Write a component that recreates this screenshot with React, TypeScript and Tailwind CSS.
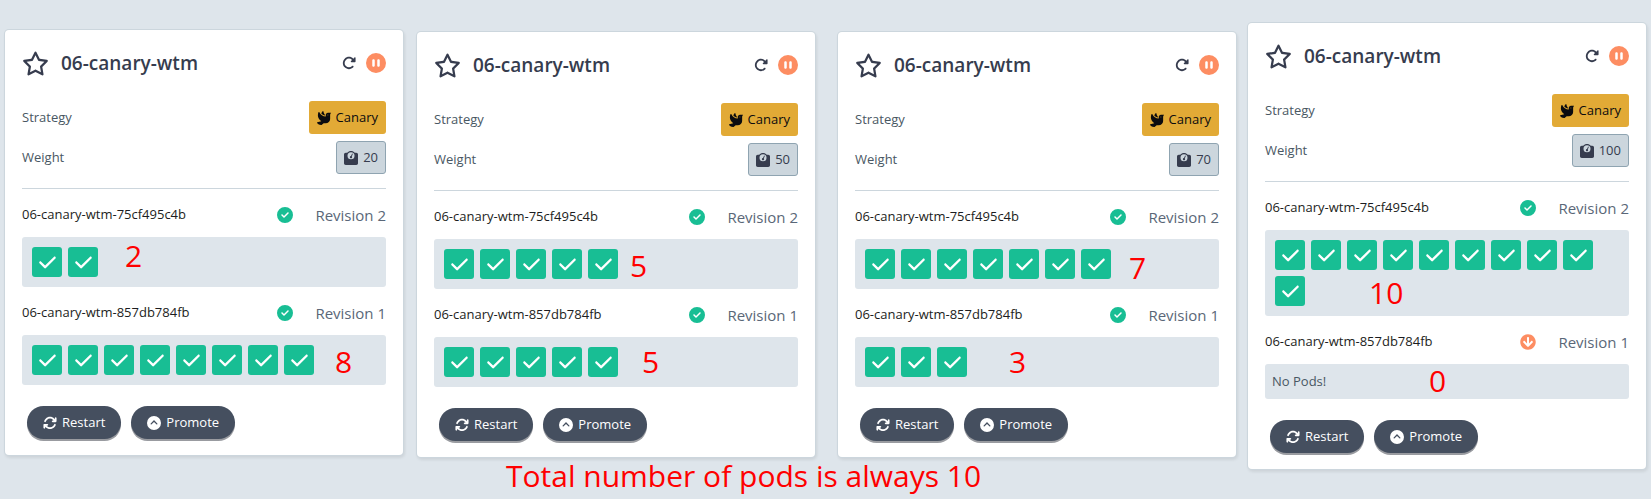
import React from "react";
import {
  FaCheck,
  FaCircleCheck,
  FaCirclePause,
  FaRegStar,
  FaRotateRight,
  FaArrowsRotate,
  FaCircleChevronUp,
  FaWeightScale,
} from "react-icons/fa6";
import { FaArrowCircleDown, FaDove } from "react-icons/fa";

type Note = { text: string; place: string };
type Revision = { name: string; number: number; pods: number; note: Note };
type Rollout = { weight: number; place: string; revisions: Revision[] };

const STABLE = "06-canary-wtm-857db784fb";
const CANARY = "06-canary-wtm-75cf495c4b";

const rollouts: Rollout[] = [
  {
    weight: 20,
    place: "mt-[30px]",
    revisions: [
      { name: CANARY, number: 2, pods: 2, note: { text: "2", place: "left-[103px] top-1" } },
      { name: STABLE, number: 1, pods: 8, note: { text: "8", place: "left-[313px] top-3" } },
    ],
  },
  {
    weight: 50,
    place: "mt-8 ml-3.5",
    revisions: [
      { name: CANARY, number: 2, pods: 5, note: { text: "5", place: "left-[196px] top-3" } },
      { name: STABLE, number: 1, pods: 5, note: { text: "5", place: "left-[208px] top-2.5" } },
    ],
  },
  {
    weight: 70,
    place: "mt-8 ml-[23px]",
    revisions: [
      { name: CANARY, number: 2, pods: 7, note: { text: "7", place: "left-[274px] top-3.5" } },
      { name: STABLE, number: 1, pods: 3, note: { text: "3", place: "left-[154px] top-2.5" } },
    ],
  },
  {
    weight: 100,
    place: "mt-[23px] ml-3",
    revisions: [
      { name: CANARY, number: 2, pods: 10, note: { text: "10", place: "left-[104px] top-12" } },
      { name: STABLE, number: 1, pods: 0, note: { text: "0", place: "left-[164px] top-0.5" } },
    ],
  },
];

function PodRow({ revision }: { revision: Revision }) {
  const { name, number, pods, note } = revision;
  return (
    <section>
      <div className="mb-2.5 mt-3.5 flex h-6 items-center">
        <h3 className="flex-1 text-[13px] text-[#1c1d21]">{name}</h3>
        {pods > 0 ? (
          <FaCircleCheck className="size-4 text-[#18be94]" />
        ) : (
          <FaArrowCircleDown className="size-4 text-[#fd8d62]" />
        )}
        <span className="w-[93px] text-right text-[15px] text-[#5a6778]">Revision {number}</span>
      </div>
      <div className="relative rounded-[3px] bg-[#dee5eb]">
        {pods > 0 ? (
          <ul className="flex flex-wrap gap-1.5 p-2.5">
            {Array.from({ length: pods }, (_, i) => (
              <li
                key={i}
                className="flex size-[30px] items-center justify-center rounded-[3px] bg-[#18be94] text-white"
              >
                <FaCheck className="size-[19px]" />
              </li>
            ))}
          </ul>
        ) : (
          <p className="px-[7px] text-[13px] leading-[35px] text-[#495763]">No Pods!</p>
        )}
        <span className={`absolute text-[30px] leading-none text-[#ff0000] ${note.place}`}>{note.text}</span>
      </div>
    </section>
  );
}

function ActionButton({ icon, label }: { icon: React.ReactNode; label: string }) {
  return (
    <button
      type="button"
      className="flex h-[33px] items-center gap-[5px] rounded-full bg-[#454f5f] px-4 text-[13px] text-white shadow-[0_2px_0_#999ba0]"
    >
      {icon}
      {label}
    </button>
  );
}

function RolloutCard({ rollout }: { rollout: Rollout }) {
  return (
    <article
      className={`min-w-0 flex-1 rounded-[4px] bg-white px-[17px] pb-4 pt-[17px] shadow-[0_0_0_1px_#ccd6dd,1px_2px_3px_1px_rgba(0,0,0,0.08)] ${rollout.place}`}
    >
      <header className="mb-[22px] flex h-8 items-center text-[#363c4e]">
        <button type="button" aria-label="Favorite">
          <FaRegStar className="size-[27px]" />
        </button>
        <h2 className="ml-3 flex-1 text-[19px] font-semibold">06-canary-wtm</h2>
        <FaRotateRight className="mr-2.5 size-3.5" />
        <FaCirclePause className="size-5 text-[#fd8d62]" />
      </header>
      <dl className="flex flex-col gap-[7px] border-b border-[#ccd6dd] pb-3.5 text-[13px] text-[#495763]">
        <div className="flex items-center justify-between">
          <dt>Strategy</dt>
          <dd className="flex h-[33px] items-center gap-[5px] rounded-[3px] bg-[#e2aa36] px-2 text-[#0b0b0f]">
            <FaDove className="size-3.5" />
            Canary
          </dd>
        </div>
        <div className="flex items-center justify-between">
          <dt>Weight</dt>
          <dd className="flex h-[33px] items-center gap-[5px] rounded-[3px] border border-[#8fa4b1] bg-[#ccd6dd] px-[7px] text-[#363c4e]">
            <FaWeightScale className="size-3.5" />
            {rollout.weight}
          </dd>
        </div>
      </dl>
      {rollout.revisions.map((revision) => (
        <PodRow key={revision.number} revision={revision} />
      ))}
      <footer className="mt-[21px] flex gap-2.5 pl-[5px]">
        <ActionButton icon={<FaArrowsRotate className="size-3.5" />} label="Restart" />
        <ActionButton icon={<FaCircleChevronUp className="size-3.5" />} label="Promote" />
      </footer>
    </article>
  );
}

export default function App() {
  return (
    <main className="relative flow-root min-h-screen bg-[#dee5eb] px-[5px] font-['Open_Sans','Noto_Sans',sans-serif]">
      <div className="flex items-start">
        {rollouts.map((rollout) => (
          <RolloutCard key={rollout.weight} rollout={rollout} />
        ))}
      </div>
      <p className="absolute left-[506px] top-[461px] whitespace-nowrap text-[30px] leading-none text-[#ff0000]">
        Total number of pods is always 10
      </p>
    </main>
  );
}
